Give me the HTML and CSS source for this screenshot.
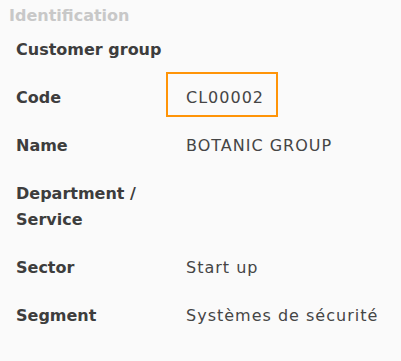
FILE: index.html
```html
<!DOCTYPE html>
<html lang="en">
<head>
  <meta charset="UTF-8">
  <title>Identification</title>
  <link rel="stylesheet" href="styles.css">
</head>
<body>
  <section class="panel">
    <h3 class="panel-title">Identification</h3>
    <div class="fields">
      <div class="field-label">Customer group</div>
      <div class="field-value"></div>

      <div class="field-label">Code</div>
      <div class="field-value">
        <div class="highlight">CL00002</div>
      </div>

      <div class="field-label">Name</div>
      <div class="field-value">BOTANIC GROUP</div>

      <div class="field-label wrap">Department / Service</div>
      <div class="field-value"></div>

      <div class="field-label">Sector</div>
      <div class="field-value">Start up</div>

      <div class="field-label">Segment</div>
      <div class="field-value">Systèmes de sécurité</div>
    </div>
  </section>
</body>
</html>
```

FILE: styles.css
```css
body {
  margin: 0;
  background-color: #fafafa;
  font-family: "DejaVu Sans", sans-serif;
  color: #3d3d3d;
}

.panel {
  padding: 5px 0 0 9px;
}

.panel-title {
  margin: 0;
  font-size: 16px;
  line-height: 21px;
  font-weight: 700;
  color: #c8c8c8;
}

.fields {
  display: grid;
  grid-template-columns: 150px 1fr;
  padding-left: 7px;
}

.field-label,
.field-value {
  font-size: 16px;
  line-height: 26px;
  min-height: 26px;
  padding: 11px 0;
}

.field-label {
  font-weight: 700;
  white-space: nowrap;
}

.field-label.wrap {
  white-space: normal;
}

.field-value {
  color: #454545;
  letter-spacing: 1px;
  padding-left: 20px;
}

.highlight {
  width: fit-content;
  margin: -13px 0 -6px -20px;
  padding: 11px 12px 4px 18px;
  border: 2px solid #ff9408;
}
```
